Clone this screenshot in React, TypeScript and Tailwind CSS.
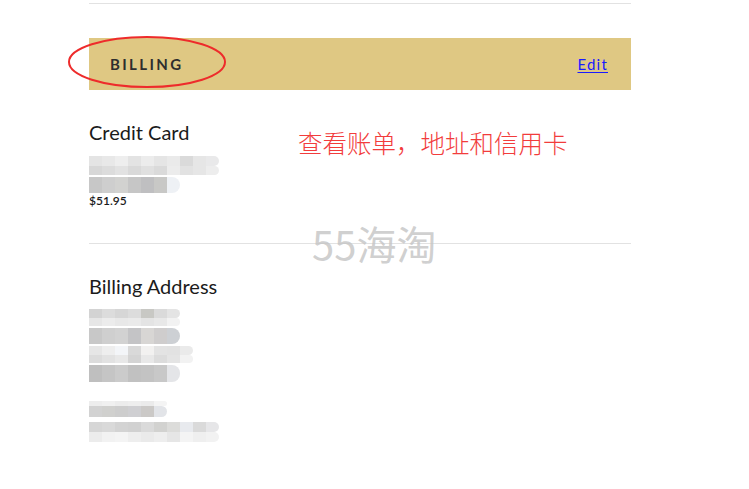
const cc1Top = ['bg-[#e4e4e4]', 'bg-[#e8e8e8]', 'bg-[#eeeeee]', 'bg-[#e3e3e3]', 'bg-[#ececec]', 'bg-[#e5e5e5]', 'bg-[#eaeaea]', 'bg-[#dadada]', 'bg-[#e6e6e6]', 'bg-[#e9e9ea]']
const cc1Bot = ['bg-[#d7d7d7]', 'bg-[#dcdcdc]', 'bg-[#e2e2e2]', 'bg-[#d9d9d9]', 'bg-[#e0e0e0]', 'bg-[#dadada]', 'bg-[#ececec]', 'bg-[#e2e2e2]', 'bg-[#e6e6e6]', 'bg-[#ededed]']
const cc2 = ['bg-[#c7c7c7]', 'bg-[#cecece]', 'bg-[#d2d2d0]', 'bg-[#c6c6c6]', 'bg-[#bfbfc1]', 'bg-[#c8c8c6]', 'bg-[#eef1f5]']

const ad1Top = ['bg-[#d3d3d3]', 'bg-[#dcdcdc]', 'bg-[#d6d6d6]', 'bg-[#dcdcdc]', 'bg-[#c8c8c4]', 'bg-[#dadada]', 'bg-[#e4e4e4]']
const ad1Bot = ['bg-[#e6e6e6]', 'bg-[#ececec]', 'bg-[#e8e8e8]', 'bg-[#eaeaea]', 'bg-[#e4e4e4]', 'bg-[#e8e8e8]', 'bg-[#f2f2f2]']
const ad2 = ['bg-[#c8c8c8]', 'bg-[#cfcfcf]', 'bg-[#d2d2d2]', 'bg-[#c4c4c6]', 'bg-[#d8d6d4]', 'bg-[#cfcdcd]', 'bg-[#cdd0d4]']
const ad3Top = ['bg-[#e6e6e6]', 'bg-[#eeeeee]', 'bg-[#f3f5f8]', 'bg-[#d9d9d9]', 'bg-[#f2f1f0]', 'bg-[#e3e3e3]', 'bg-[#e2e2e2]', 'bg-[#eaeaea]']
const ad3Bot = ['bg-[#dcdcdc]', 'bg-[#e2e2e2]', 'bg-[#e8e8e8]', 'bg-[#d4d4d4]', 'bg-[#e8e8e8]', 'bg-[#dcdcdc]', 'bg-[#e4e4e4]', 'bg-[#f2f2f2]']
const ad4 = ['bg-[#bfbfbf]', 'bg-[#c5c5c5]', 'bg-[#cbcbcb]', 'bg-[#c1c1c1]', 'bg-[#c3c3c3]', 'bg-[#c8c8c8]', 'bg-[#e4e5e8]']
const ad5Top = ['bg-[#ededed]', 'bg-[#f0f0f0]', 'bg-[#ececec]', 'bg-[#eeeeee]', 'bg-[#ebebeb]', 'bg-[#f4f4f4]']
const ad5Bot = ['bg-[#d2d2d2]', 'bg-[#d0d0ce]', 'bg-[#cdcdcd]', 'bg-[#cfcfd2]', 'bg-[#cbc9c7]', 'bg-[#e2e4e8]']
const ad6Top = ['bg-[#d6d6d6]', 'bg-[#d9d9d9]', 'bg-[#d3d3d3]', 'bg-[#d1d1d1]', 'bg-[#dadada]', 'bg-[#d2d2d0]', 'bg-[#dcdcda]', 'bg-[#e8eaee]', 'bg-[#dadada]', 'bg-[#e6e6e8]']
const ad6Bot = ['bg-[#ececec]', 'bg-[#f2f2f2]', 'bg-[#f4f4f4]', 'bg-[#eeeeee]', 'bg-[#eaeaea]', 'bg-[#eeeeee]', 'bg-[#e6e6e6]', 'bg-[#f4f4f4]', 'bg-[#efefef]', 'bg-[#f2f2f2]']

const Strip = ({ cells, h }: { cells: string[]; h: string }) => (
  <div className="flex">
    {cells.map((c, i) => (
      <div key={i} className={`w-[13px] ${h} ${c} ${i === cells.length - 1 ? 'rounded-r-lg' : ''}`} />
    ))}
  </div>
)

const sans = "font-['Lato','Open_Sans',sans-serif]"

export default function App() {
  return (
    <div className="relative h-[489px] w-[749px] overflow-hidden bg-white">
      <div className="ml-[89px] w-[542px] pt-[3px]">
        <div className="h-px bg-[#e2e2e2]" />

        <div className="mt-[34px] flex h-[52px] items-center justify-between bg-[#dfc883] pl-[21px] pr-[23px]">
          <span className={`${sans} text-[15px] font-bold tracking-[0.16em] text-[#2e2e2e]`}>BILLING</span>
          <a className={`${sans} text-[15px] tracking-[0.08em] text-[#1a1aff] underline underline-offset-2`}>Edit</a>
        </div>

        <div className="mt-[30px]">
          <div className={`${sans} text-[20px] leading-6 text-[#1b1b1b]`}>Credit Card</div>
          <div className="mt-[12px] flex flex-col gap-[2px]">
            <div>
              <Strip cells={cc1Top} h="h-[10px]" />
              <Strip cells={cc1Bot} h="h-[9px]" />
            </div>
            <Strip cells={cc2} h="h-[16px]" />
          </div>
          <div className={`${sans} mt-px text-[12px] leading-[14px] font-semibold text-[#1b1b1b]`}>$51.95</div>
        </div>

        <div className="mt-[35px] h-px bg-[#e2e2e2]" />

        <div className="mt-[30px]">
          <div className={`${sans} text-[20px] leading-6 text-[#1b1b1b]`}>Billing Address</div>
          <div className="mt-[11px] flex flex-col gap-[2px]">
            <div>
              <Strip cells={ad1Top} h="h-[9px]" />
              <Strip cells={ad1Bot} h="h-[8px]" />
            </div>
            <Strip cells={ad2} h="h-[16px]" />
            <div>
              <Strip cells={ad3Top} h="h-[9px]" />
              <Strip cells={ad3Bot} h="h-[8px]" />
            </div>
            <Strip cells={ad4} h="h-[17px]" />
            <div className="mt-[17px]">
              <Strip cells={ad5Top} h="h-[5px]" />
              <Strip cells={ad5Bot} h="h-[11px]" />
            </div>
            <div className="mt-[3px]">
              <Strip cells={ad6Top} h="h-[10px]" />
              <Strip cells={ad6Bot} h="h-[10px]" />
            </div>
          </div>
        </div>
      </div>

      {/* annotation ellipse */}
      <svg className="absolute left-[66px] top-[34px]" width="162" height="56" viewBox="0 0 162 56">
        <ellipse cx="81" cy="28" rx="78" ry="25" fill="none" stroke="#ee2b2b" strokeWidth="2" />
      </svg>

      {/* annotation text */}
      <div className="absolute left-[298px] top-[127px] font-['Noto_Sans_CJK_SC',sans-serif] text-[24.5px] leading-8 font-light text-[#f23c3c]">
        查看账单，地址和信用卡
      </div>

      {/* watermark */}
      <div className="absolute left-[312px] top-[219px] font-['Noto_Sans_CJK_SC',sans-serif] text-[40px] leading-[48px] text-[#c4c4c4]/80">
        55海淘
      </div>
    </div>
  )
}
